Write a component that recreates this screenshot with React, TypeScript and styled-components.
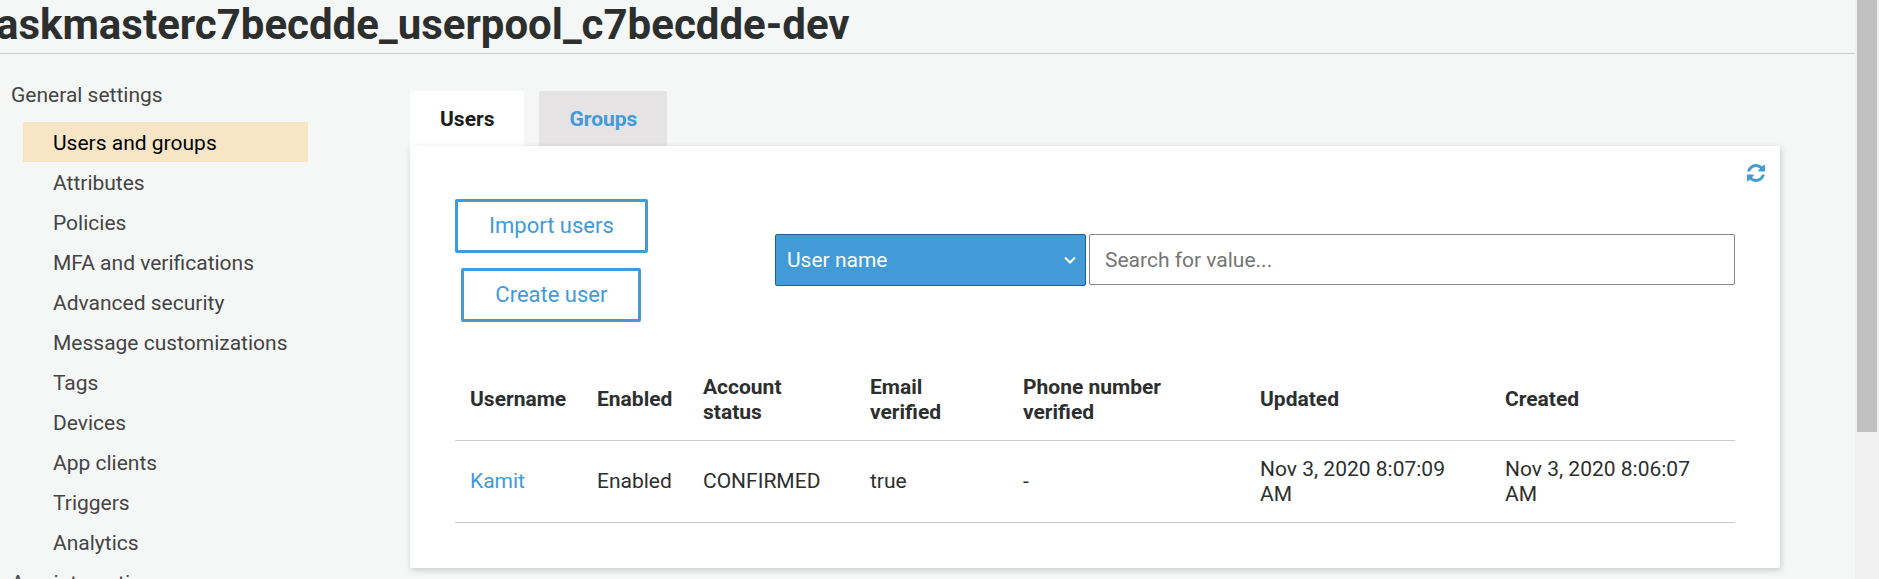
import React from "react";
import styled, { createGlobalStyle } from "styled-components";

const GlobalStyle = createGlobalStyle`
  *, *::before, *::after { box-sizing: border-box; }
  body {
    margin: 0;
    background: #f4f7f6;
    color: #2d2f2f;
    font: 400 21px/25px Roboto, "Liberation Sans", sans-serif;
  }
  button, input, select { font: inherit; }
`;

const blue = "#429ad7";

const Window = styled.div`
  display: flex;
  height: 100vh;
  overflow: hidden;
`;

const Page = styled.div`
  flex: 1;
  min-width: 0;
`;

const ScrollTrack = styled.div`
  flex: none;
  width: 24px;
  padding: 0 2px;
  background: #f0f0f0;
`;

const ScrollThumb = styled.div`
  height: 432px;
  background: #c1c1c1;
`;

const Header = styled.header`
  height: 54px;
  border-bottom: 1px solid #c8cccb;
`;

const Title = styled.h1`
  margin: 0 -4px;
  font-size: 42px;
  line-height: 50px;
  font-weight: 700;
  white-space: nowrap;
`;

const Body = styled.div`
  display: flex;
  align-items: flex-start;
`;

const Sidebar = styled.nav`
  flex: none;
  width: 410px;
  padding: 20px 102px 0 11px;
  line-height: 38px;
`;

const SectionLink = styled.a`
  display: block;
  padding-top: 2px;
  color: #444;
  text-decoration: none;
`;

const SideList = styled.ul`
  list-style: none;
  margin: 8px 0 0 12px;
  padding: 0;
`;

const SideLink = styled.a<{ $active?: boolean }>`
  display: block;
  padding: 2px 0 0 30px;
  color: ${(p) => (p.$active ? "#000" : "#444")};
  background: ${(p) => (p.$active ? "#f8e5c6" : "transparent")};
  text-decoration: none;
`;

const Main = styled.main`
  flex: 1;
  min-width: 0;
  padding: 37px 75px 0 0;
`;

const Tabs = styled.div`
  display: flex;
  gap: 15px;
`;

const Tab = styled.button<{ $active?: boolean }>`
  height: 55px;
  padding: 2px 30px 0;
  border: 0;
  border-radius: 2px 2px 0 0;
  background: ${(p) => (p.$active ? "#fff" : "#e5e3e4")};
  color: ${(p) => (p.$active ? "#1b1d1d" : blue)};
  font-weight: 700;
`;

const Panel = styled.section`
  position: relative;
  padding: 53px 45px 45px;
  border-radius: 2px;
  background: #fff;
  box-shadow: 1px 2px 6px rgba(0, 0, 0, 0.18);
`;

const RefreshButton = styled.button`
  position: absolute;
  top: 18px;
  right: 15px;
  display: flex;
  padding: 0;
  border: 0;
  background: none;
  color: ${blue};
`;

const Toolbar = styled.div`
  display: flex;
  justify-content: space-between;
  align-items: center;
  margin-bottom: 37px;
`;

const Actions = styled.div`
  display: flex;
  flex-direction: column;
  align-items: center;
  gap: 15px;
`;

const ActionButton = styled.button`
  height: 54px;
  padding: 0 31px 2px;
  border: 3px solid ${blue};
  border-radius: 2px;
  background: #fff;
  color: ${blue};
  font-size: 22px;
`;

const Search = styled.form`
  display: flex;
  align-items: flex-start;
  gap: 3px;
  width: 75%;
  height: 53px;
`;

const SelectBox = styled.div`
  position: relative;
  flex: 0 0 311px;
  color: #fff;
`;

const Select = styled.select`
  appearance: none;
  display: block;
  width: 100%;
  height: 52px;
  padding: 0 40px 0 11px;
  border: 1px solid #245c93;
  border-radius: 2px;
  background: ${blue};
  color: inherit;
`;

const Chevron = styled.svg`
  position: absolute;
  top: 22px;
  right: 10px;
  pointer-events: none;
`;

const SearchInput = styled.input`
  flex: 1;
  min-width: 0;
  height: 51px;
  padding: 0 15px;
  border: 1px solid #878c8b;
  border-radius: 2px;
  background: #fff;
  &::placeholder { color: #757575; }
`;

const Table = styled.table`
  width: 100%;
  table-layout: fixed;
  border-collapse: separate;
  border-spacing: 0;
  text-align: left;
`;

const cell = `
  height: 82px;
  padding: 15px;
  border-bottom: 1px solid #c8cccb;
`;
const HeadCell = styled.th<{ $width: number }>`
  ${cell}
  width: ${(p) => p.$width}px;
  font-weight: 700;
`;
const Cell = styled.td`${cell}`;

const UserLink = styled.a`
  color: ${blue};
  text-decoration: none;
`;

const items = [
  "Users and groups", "Attributes", "Policies", "MFA and verifications",
  "Advanced security", "Message customizations", "Tags", "Devices",
  "App clients", "Triggers", "Analytics",
];

const columns: [string, number][] = [
  ["Username", 127], ["Enabled", 106], ["Account status", 167],
  ["Email verified", 153], ["Phone number verified", 237],
  ["Updated", 245], ["Created", 245],
];

const values = ["Enabled", "CONFIRMED", "true", "-", "Nov 3, 2020 8:07:09 AM", "Nov 3, 2020 8:06:07 AM"];

export default function App() {
  return (
    <Window>
      <GlobalStyle />
      <Page>
        <Header>
          <Title>askmasterc7becdde_userpool_c7becdde-dev</Title>
        </Header>
        <Body>
          <Sidebar>
            <SectionLink href="#general">General settings</SectionLink>
            <SideList>
              {items.map((label, i) => (
                <li key={label}>
                  <SideLink href="#settings" $active={i === 0}>{label}</SideLink>
                </li>
              ))}
            </SideList>
            <SectionLink href="#integration">App integration</SectionLink>
          </Sidebar>
          <Main>
            <Tabs role="tablist">
              <Tab role="tab" aria-selected $active>Users</Tab>
              <Tab role="tab" aria-selected={false}>Groups</Tab>
            </Tabs>
            <Panel>
              <RefreshButton aria-label="Refresh">
                <svg width="18" height="18" viewBox="0 128 1536 1536" fill="currentColor">
                  <path d="M1511 1056q0 5-1 7-64 268-268 434.500t-478 166.500q-146 0-282.500-55t-243.500-157l-129 129q-19 19-45 19t-45-19-19-45v-448q0-26 19-45t45-19h448q26 0 45 19t19 45-19 45l-137 137q71 66 161 102t187 36q134 0 250-65t186-179q11-17 53-117 8-23 30-23h192q13 0 22.500 9.500t9.500 22.500zm25-800v448q0 26-19 45t-45 19h-448q-26 0-45-19t-19-45 19-45l138-138q-148-137-349-137-134 0-250 65t-186 179q-11 17-53 117-8 23-30 23h-199q-13 0-22.500-9.500t-9.500-22.500v-7q65-268 270-434.500t480-166.500q146 0 284 55.500t245 156.500l130-129q19-19 45-19t45 19 19 45z" />
                </svg>
              </RefreshButton>
              <Toolbar>
                <Actions>
                  <ActionButton>Import users</ActionButton>
                  <ActionButton>Create user</ActionButton>
                </Actions>
                <Search>
                  <SelectBox>
                    <Select aria-label="Search attribute" defaultValue="User name">
                      <option>User name</option>
                    </Select>
                    <Chevron width="12" height="9" viewBox="0 0 12 9" fill="none" stroke="currentColor" strokeWidth="2">
                      <path d="M1 1.500 6 6.500 11 1.500" />
                    </Chevron>
                  </SelectBox>
                  <SearchInput aria-label="Search value" placeholder="Search for value..." />
                </Search>
              </Toolbar>
              <Table>
                <thead>
                  <tr>
                    {columns.map(([label, width]) => (
                      <HeadCell key={label} scope="col" $width={width}>{label}</HeadCell>
                    ))}
                  </tr>
                </thead>
                <tbody>
                  <tr>
                    <Cell><UserLink href="#kamit">Kamit</UserLink></Cell>
                    {values.map((v) => <Cell key={v}>{v}</Cell>)}
                  </tr>
                </tbody>
              </Table>
            </Panel>
          </Main>
        </Body>
      </Page>
      <ScrollTrack aria-hidden="true"><ScrollThumb /></ScrollTrack>
    </Window>
  );
}
